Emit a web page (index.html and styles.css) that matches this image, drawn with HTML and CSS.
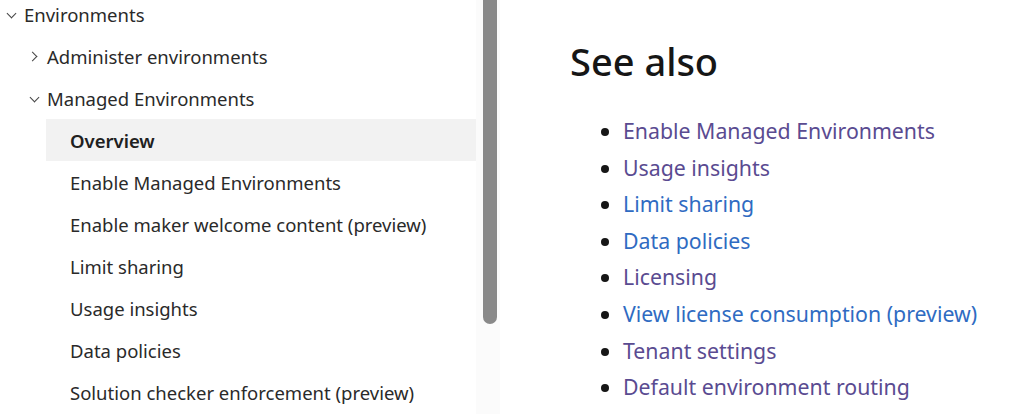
FILE: index.html
```html
<!DOCTYPE html>
<html lang="en">
<head>
<meta charset="utf-8">
<title>Managed Environments</title>
<link rel="stylesheet" href="styles.css">
</head>
<body>
<div class="page">
  <nav class="toc">
    <ul class="tree">
      <li class="row lvl0"><span class="chev down"></span><span>Environments</span></li>
      <li class="row lvl1"><span class="chev right"></span><span>Administer environments</span></li>
      <li class="row lvl1"><span class="chev down"></span><span>Managed Environments</span></li>
      <li class="row lvl2 active"><span>Overview</span></li>
      <li class="row lvl2"><span>Enable Managed Environments</span></li>
      <li class="row lvl2"><span>Enable maker welcome content (preview)</span></li>
      <li class="row lvl2"><span>Limit sharing</span></li>
      <li class="row lvl2"><span>Usage insights</span></li>
      <li class="row lvl2"><span>Data policies</span></li>
      <li class="row lvl2"><span>Solution checker enforcement (preview)</span></li>
    </ul>
  </nav>
  <div class="scrollbar"><div class="thumb"></div></div>
  <main class="content">
    <h2 class="heading">See also</h2>
    <ul class="links">
      <li><a class="visited" href="#">Enable Managed Environments</a></li>
      <li><a class="visited" href="#">Usage insights</a></li>
      <li><a href="#">Limit sharing</a></li>
      <li><a href="#">Data policies</a></li>
      <li><a class="visited" href="#">Licensing</a></li>
      <li><a href="#">View license consumption (preview)</a></li>
      <li><a class="visited" href="#">Tenant settings</a></li>
      <li><a class="visited" href="#">Default environment routing</a></li>
    </ul>
  </main>
</div>
</body>
</html>
```
FILE: styles.css
```css
html, body {
  margin: 0;
  padding: 0;
  background: #ffffff;
  height: 414px;
  overflow: hidden;
}
body {
  font-family: "Segoe UI", "Noto Sans", "Open Sans", sans-serif;
  color: #242424;
}
.page {
  display: flex;
  height: 414px;
}
.toc {
  width: 476px;
  flex: none;
}
.tree {
  list-style: none;
  margin: -7px 0 0 0;
  padding: 0;
}
.row {
  height: 42px;
  display: flex;
  align-items: center;
  font-size: 18.5px;
  color: #2a2a2a;
  white-space: nowrap;
}
.lvl0 { padding-left: 5px; }
.lvl1 { padding-left: 28px; }
.lvl2 { margin-left: 46px; padding-left: 24px; }
.active {
  background: #f2f2f2;
  font-weight: 600;
  color: #202020;
}
.chev {
  width: 13px;
  height: 13px;
  margin-right: 6px;
  position: relative;
}
.chev::before {
  content: "";
  position: absolute;
  width: 6px;
  height: 6px;
  border-right: 1.3px solid #444;
  border-bottom: 1.3px solid #444;
}
.chev.down::before {
  left: 3px;
  top: 2px;
  transform: rotate(45deg);
}
.chev.right::before {
  left: 1px;
  top: 3px;
  transform: rotate(-45deg);
}
.scrollbar {
  width: 24px;
  flex: none;
  background: #fbfbfb;
  display: flex;
  justify-content: center;
}
.thumb {
  width: 14px;
  height: 324px;
  background: #898989;
  border-radius: 0 0 7px 7px;
  margin-left: 4px;
}
.content {
  flex: 1;
  padding-left: 70px;
}
.heading {
  margin: 35px 0 0 0;
  font-size: 38px;
  font-weight: 500;
  line-height: 52px;
  color: #161616;
}
.links {
  margin: 26px 0 0 0;
  padding-left: 53px;
  font-size: 21.3px;
  line-height: 36.6px;
  color: #161616;
}
.links a {
  color: #2f6bc2;
  text-decoration: none;
}
.links a.visited {
  color: #5a4b91;
}
```
